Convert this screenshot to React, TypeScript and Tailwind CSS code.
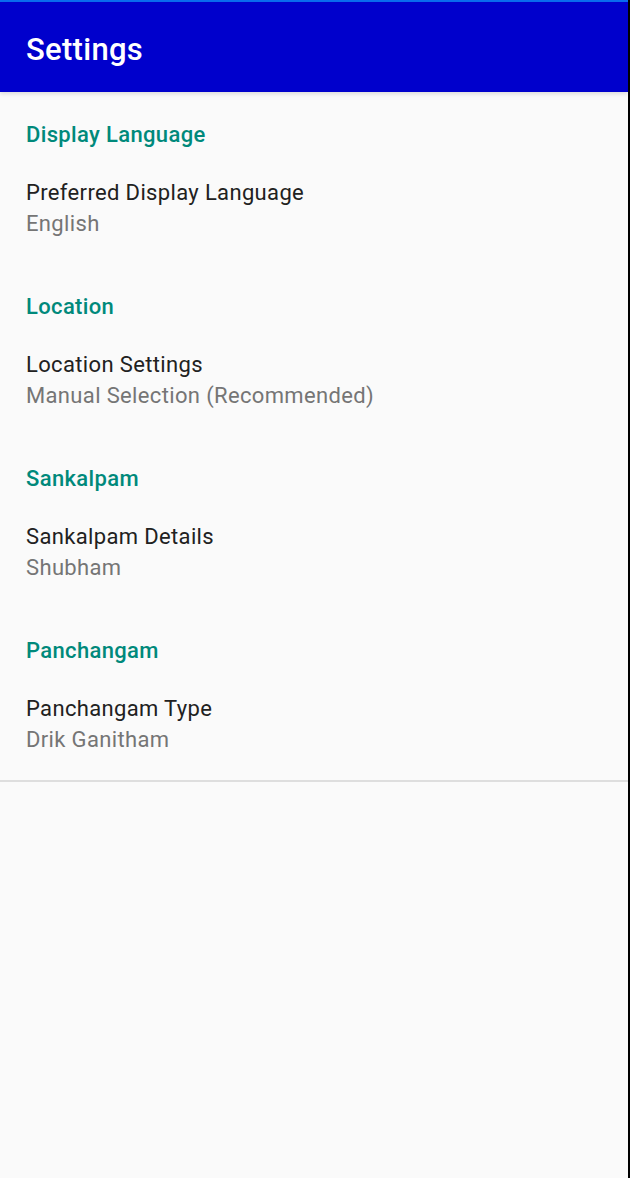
const sections = [
  { heading: "Display Language", title: "Preferred Display Language", summary: "English" },
  { heading: "Location", title: "Location Settings", summary: "Manual Selection (Recommended)" },
  { heading: "Sankalpam", title: "Sankalpam Details", summary: "Shubham" },
  { heading: "Panchangam", title: "Panchangam Type", summary: "Drik Ganitham" },
];

export default function App() {
  return (
    <div className="flex h-[1178px] w-[630px] overflow-hidden font-['Roboto',sans-serif]">
      <div className="flex w-[628px] flex-col bg-[#fafafa]">
        <div className="h-[2px] bg-[#0a6cf0]" />
        <header className="relative z-10 flex h-[90px] items-center bg-[#0000cc] px-[26px] shadow-[0_2px_4px_rgba(0,0,0,0.12)]">
          <h1 className="mt-[4px] text-[31px] font-medium leading-none tracking-[0.3px] text-white">Settings</h1>
        </header>
        <div className="border-b-2 border-[#dedede]">
          {sections.map(s => (
            <section key={s.heading} className="h-[172px] px-[26px] pt-[29px]">
              <h2 className="h-[28px] text-[22px] font-medium leading-[28px] tracking-[0.35px] text-[#00897b]">{s.heading}</h2>
              <div className="pt-[29px] text-[22px] tracking-[0.35px]">
                <p className="h-[30px] leading-[30px] text-[#212121]">{s.title}</p>
                <p className="mt-[1px] h-[30px] leading-[30px] text-[#757575]">{s.summary}</p>
              </div>
            </section>
          ))}
        </div>
      </div>
      <div className="w-[2px] bg-black" />
    </div>
  );
}
